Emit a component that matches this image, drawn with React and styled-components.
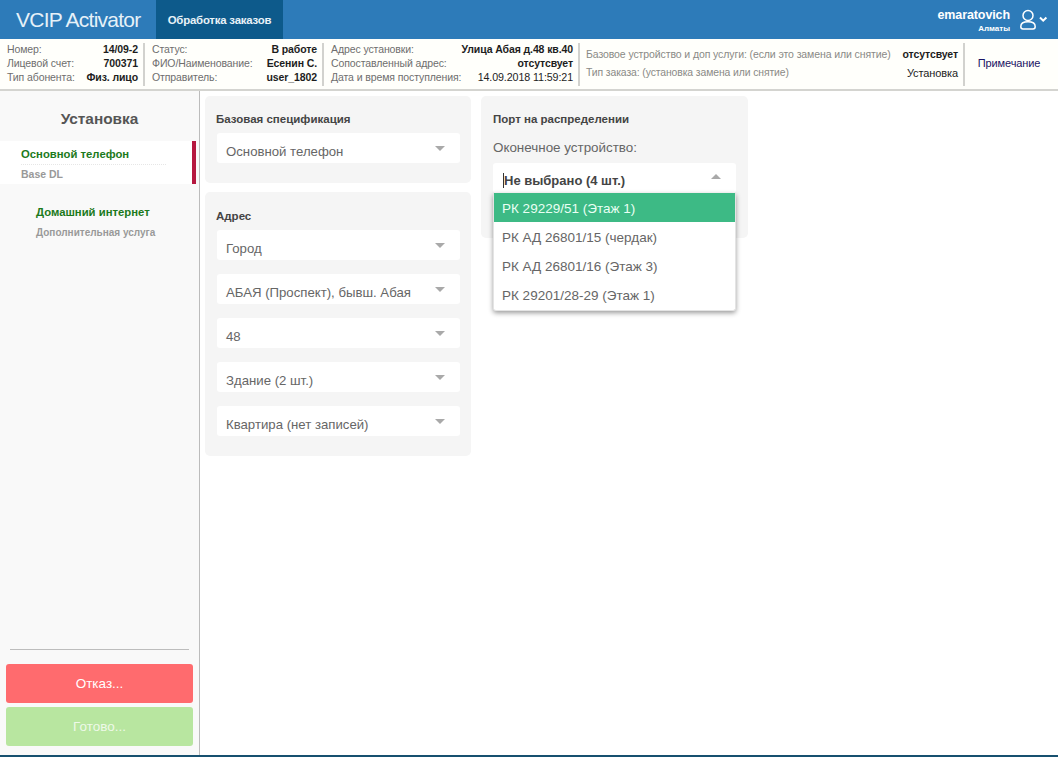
import React from "react";
import styled, { createGlobalStyle } from "styled-components";

const Global = createGlobalStyle`
  html, body { margin: 0; padding: 0; height: 100%; background: #fff; }
  body { font-family: "Liberation Sans", Arial, sans-serif; overflow: hidden; }
  #root { height: 100%; }
  * { box-sizing: border-box; }
`;

const Page = styled.div`
  width: 1058px;
  height: 757px;
  display: flex;
  flex-direction: column;
  border-bottom: 2px solid #17506f;
  overflow: hidden;
`;

const TopBar = styled.header`
  height: 39px;
  flex: none;
  display: flex;
  background: #2d7bb9;
  color: #fff;
`;

const Brand = styled.div`
  width: 156px;
  padding-left: 16px;
  font-size: 21px;
  line-height: 40px;
  letter-spacing: -0.75px;
  color: #e6f1f8;
`;

const ActiveTab = styled.div`
  width: 127px;
  background: #0d5a8b;
  font-size: 11.4px;
  font-weight: 700;
  line-height: 40px;
  letter-spacing: -0.2px;
  text-align: center;
  color: #e8f2f8;
`;

const UserBlock = styled.div`
  margin-left: auto;
  display: flex;
  align-items: flex-start;
  padding: 9px 7px 0 0;
  gap: 9px;
`;

const UserText = styled.div`
  display: flex;
  flex-direction: column;
  align-items: flex-end;
`;

const UserName = styled.span`
  font-size: 12.5px;
  font-weight: 700;
  line-height: 13px;
  letter-spacing: -0.1px;
`;

const UserCity = styled.span`
  font-size: 8px;
  font-weight: 700;
  line-height: 11px;
  margin-top: 1px;
`;

const InfoBar = styled.section`
  height: 52px;
  flex: none;
  display: flex;
  align-items: stretch;
  padding: 4px 0 3px 7px;
  background: #fffffb;
  border-bottom: 2px solid #d4d4d0;
  font-size: 10.5px;
  letter-spacing: -0.1px;
`;

const InfoCol = styled.div`
  width: ${(p) => p.$width}px;
  flex: none;
  display: flex;
  flex-direction: column;
  justify-content: ${(p) => (p.$spread ? "space-around" : "center")};
  padding: ${(p) => (p.$spread ? "1px" : "0")} 5px 3px 0;
  margin-right: ${(p) => p.$gap}px;
  border-right: 2px solid #d2d2ce;
`;

const InfoRow = styled.div`
  display: flex;
  justify-content: space-between;
  line-height: 14px;
  white-space: nowrap;
`;

const InfoLabel = styled.span`
  color: ${(p) => (p.$soft ? "#8a8a86" : "#6e6e6e")};
  font-size: ${(p) => p.$size || 10.5}px;
`;

const InfoValue = styled.span`
  color: #1d1d1d;
  font-weight: ${(p) => (p.$regular ? 400 : 700)};
  font-size: ${(p) => p.$size || 10.5}px;
`;

const NoteLink = styled.div`
  flex: 1;
  align-self: center;
  padding: 0 5px 3px 0;
  text-align: center;
  color: #1b1464;
  font-size: 11px;
`;

const Body = styled.div`
  flex: 1;
  min-height: 0;
  display: flex;
`;

const Sidebar = styled.aside`
  width: 200px;
  flex: none;
  display: flex;
  flex-direction: column;
  background: #f9f9f9;
  border-right: 1px solid #bcbcbc;
`;

const SideTitle = styled.h2`
  margin: 0;
  padding-top: 18px;
  height: 50px;
  text-align: center;
  font-size: 15.4px;
  font-weight: 700;
  line-height: 19px;
  color: #555;
`;

const ActiveService = styled.div`
  margin-right: 3px;
  height: 43px;
  padding: 6px 0 0 21px;
  background: #fff;
  border-right: 4px solid #b5173f;
`;

const ServiceName = styled.div`
  font-size: 11.3px;
  font-weight: 700;
  line-height: 14px;
  color: #1c7a1c;
`;

const ServiceSub = styled.div`
  margin-top: ${(p) => p.$gap}px;
  font-size: ${(p) => p.$size}px;
  font-weight: 700;
  line-height: 13px;
  color: #999;
`;

const ActiveRule = styled.div`
  width: 145px;
  margin-top: 3px;
  border-top: 1px dotted #e6e6e6;
`;

const Service = styled.div`
  padding: 21px 0 0 36px;
`;

const Spacer = styled.div`
  flex: 1;
`;

const SideRule = styled.div`
  margin: 0 10px 14px;
  border-top: 1px solid #bdbdbd;
`;

const ActionButton = styled.div`
  height: 39px;
  margin: 0 6px ${(p) => p.$after}px;
  border-radius: 3px;
  background: ${(p) => p.$bg};
  color: ${(p) => p.$fg};
  font-size: 13.5px;
  line-height: 39px;
  text-align: center;
`;

const Main = styled.main`
  flex: 1;
  display: flex;
  align-items: flex-start;
  gap: 10px;
  padding: 5px 0 0 5px;
`;

const Column = styled.div`
  display: flex;
  flex-direction: column;
  gap: 9px;
`;

const Card = styled.div`
  width: ${(p) => p.$width}px;
  height: ${(p) => p.$height}px;
  padding: ${(p) => p.$top}px 12px 0;
  background: #f5f5f5;
  border-radius: 5px;
`;

const CardTitle = styled.div`
  margin-left: ${(p) => p.$shift || 0}px;
  font-size: 11.5px;
  font-weight: 700;
  line-height: 15px;
  color: #444;
  margin-bottom: ${(p) => p.$gap}px;
`;

const FieldLabel = styled.div`
  font-size: 13.4px;
  line-height: 16px;
  color: #666;
  margin: 13px 0 7px;
`;

const Select = styled.div`
  position: relative;
  width: 243px;
  height: 30px;
  margin-bottom: 14px;
  padding: ${(p) => (p.$bold ? "4px 10px 0" : "6px 9px 0")};
  display: flex;
  align-items: center;
  background: #fff;
  border-radius: 3px;
  font-size: ${(p) => (p.$bold ? 13 : 13.2)}px;
  font-weight: ${(p) => (p.$bold ? 700 : 400)};
  color: ${(p) => (p.$bold ? "#444" : "#666")};
`;

const Caret = styled.span`
  position: absolute;
  right: 15px;
  top: ${(p) => (p.$up ? 11 : 13)}px;
  width: 0;
  height: 0;
  border-left: 5px solid transparent;
  border-right: 5px solid transparent;
  ${(p) => (p.$up ? "border-bottom: 5px solid #a9a9a9;" : "border-top: 5px solid #a9a9a9;")}
`;

const TextCursor = styled.span`
  width: 1px;
  height: 15px;
  background: #333;
`;

const Menu = styled.div`
  position: absolute;
  left: 0;
  top: 30px;
  z-index: 2;
  width: 243px;
  padding-bottom: 1px;
  background: #fff;
  border-radius: 0 0 3px 3px;
  box-shadow: 0 2px 5px rgba(0, 0, 0, 0.4);
  border: 1px solid #e4e4e4;
  border-top: 0;
`;

const MenuItem = styled.div`
  height: 29px;
  padding: 0 8px;
  line-height: 32px;
  font-size: 13.5px;
  font-weight: 400;
  background: ${(p) => (p.$active ? "#3dba85" : "#fff")};
  color: ${(p) => (p.$active ? "#eafff4" : "#666")};
`;

const Pick = ({ children, bold, up, cursor, menu }) => (
  <Select $bold={bold}>
    {cursor && <TextCursor />}
    <span>{children}</span>
    <Caret $up={up} />
    {menu}
  </Select>
);

const UserIcon = () => (
  <svg width="32" height="22" viewBox="0 0 32 22" fill="none" stroke="#fff" strokeWidth="1.5">
    <circle cx="9" cy="6.5" r="5" />
    <path d="M1.8 17.5c0-3 3-4.7 7.2-4.7s7.2 1.7 7.2 4.7c0 1.6-.9 2.5-2.2 2.5H4c-1.3 0-2.2-.9-2.2-2.5Z" />
    <path d="M21 8.5l3.2 3.2 3.2-3.2" strokeWidth="2" />
  </svg>
);

const infoA = [
  ["Номер:", "14/09-2"],
  ["Лицевой счет:", "700371"],
  ["Тип абонента:", "Физ. лицо"],
];
const infoB = [
  ["Статус:", "В работе"],
  ["ФИО/Наименование:", "Есенин С."],
  ["Отправитель:", "user_1802"],
];
const infoC = [
  ["Адрес установки:", "Улица Абая д.48 кв.40"],
  ["Сопоставленный адрес:", "отсутсвует"],
  ["Дата и время поступления:", "14.09.2018 11:59:21", true],
];

const Rows = ({ rows }) =>
  rows.map(([label, value, regular]) => (
    <InfoRow key={label}>
      <InfoLabel>{label}</InfoLabel>
      <InfoValue $regular={regular} $size={regular ? 10.7 : undefined}>{value}</InfoValue>
    </InfoRow>
  ));

export default function App() {
  return (
    <Page>
      <Global />
      <TopBar>
        <Brand>VCIP Activator</Brand>
        <ActiveTab>Обработка заказов</ActiveTab>
        <UserBlock>
          <UserText>
            <UserName>emaratovich</UserName>
            <UserCity>Алматы</UserCity>
          </UserText>
          <UserIcon />
        </UserBlock>
      </TopBar>
      <InfoBar>
        <InfoCol $width={138} $gap={7}><Rows rows={infoA} /></InfoCol>
        <InfoCol $width={172} $gap={7}><Rows rows={infoB} /></InfoCol>
        <InfoCol $width={249} $gap={6}><Rows rows={infoC} /></InfoCol>
        <InfoCol $width={379} $gap={0} $spread>
          <InfoRow>
            <InfoLabel $soft>Базовое устройство и доп услуги: (если это замена или снятие)</InfoLabel>
            <InfoValue>отсутсвует</InfoValue>
          </InfoRow>
          <InfoRow>
            <InfoLabel $soft $size={10.4}>Тип заказа: (установка замена или снятие)</InfoLabel>
            <InfoValue $regular $size={11}>Установка</InfoValue>
          </InfoRow>
        </InfoCol>
        <NoteLink>Примечание</NoteLink>
      </InfoBar>
      <Body>
        <Sidebar>
          <SideTitle>Установка</SideTitle>
          <ActiveService>
            <ServiceName>Основной телефон</ServiceName>
            <ActiveRule />
            <ServiceSub $gap={3} $size={10.5}>Base DL</ServiceSub>
          </ActiveService>
          <Service>
            <ServiceName>Домашний интернет</ServiceName>
            <ServiceSub $gap={7} $size={10}>Дополнительная услуга</ServiceSub>
          </Service>
          <Spacer />
          <SideRule />
          <ActionButton $bg="#ff6b6e" $fg="#fff" $after={4}>Отказ...</ActionButton>
          <ActionButton $bg="#b8e6a0" $fg="#eef9e8" $after={9}>Готово...</ActionButton>
        </Sidebar>
        <Main>
          <Column>
            <Card $width={266} $height={87} $top={16}>
              <CardTitle $gap={6} $shift={-1}>Базовая спецификация</CardTitle>
              <Pick>Основной телефон</Pick>
            </Card>
            <Card $width={266} $height={264} $top={17}>
              <CardTitle $gap={6} $shift={-1}>Адрес</CardTitle>
              <Pick>Город</Pick>
              <Pick>АБАЯ (Проспект), бывш. Абая</Pick>
              <Pick>48</Pick>
              <Pick>Здание (2 шт.)</Pick>
              <Pick>Квартира (нет записей)</Pick>
            </Card>
          </Column>
          <Card $width={267} $height={142} $top={16}>
            <CardTitle $gap={0}>Порт на распределении</CardTitle>
            <FieldLabel>Оконечное устройство:</FieldLabel>
            <Pick
              bold
              up
              cursor
              menu={
                <Menu>
                  <MenuItem $active>РК 29229/51 (Этаж 1)</MenuItem>
                  <MenuItem>РК АД 26801/15 (чердак)</MenuItem>
                  <MenuItem>РК АД 26801/16 (Этаж 3)</MenuItem>
                  <MenuItem>РК 29201/28-29 (Этаж 1)</MenuItem>
                </Menu>
              }
            >
              Не выбрано (4 шт.)
            </Pick>
          </Card>
        </Main>
      </Body>
    </Page>
  );
}
